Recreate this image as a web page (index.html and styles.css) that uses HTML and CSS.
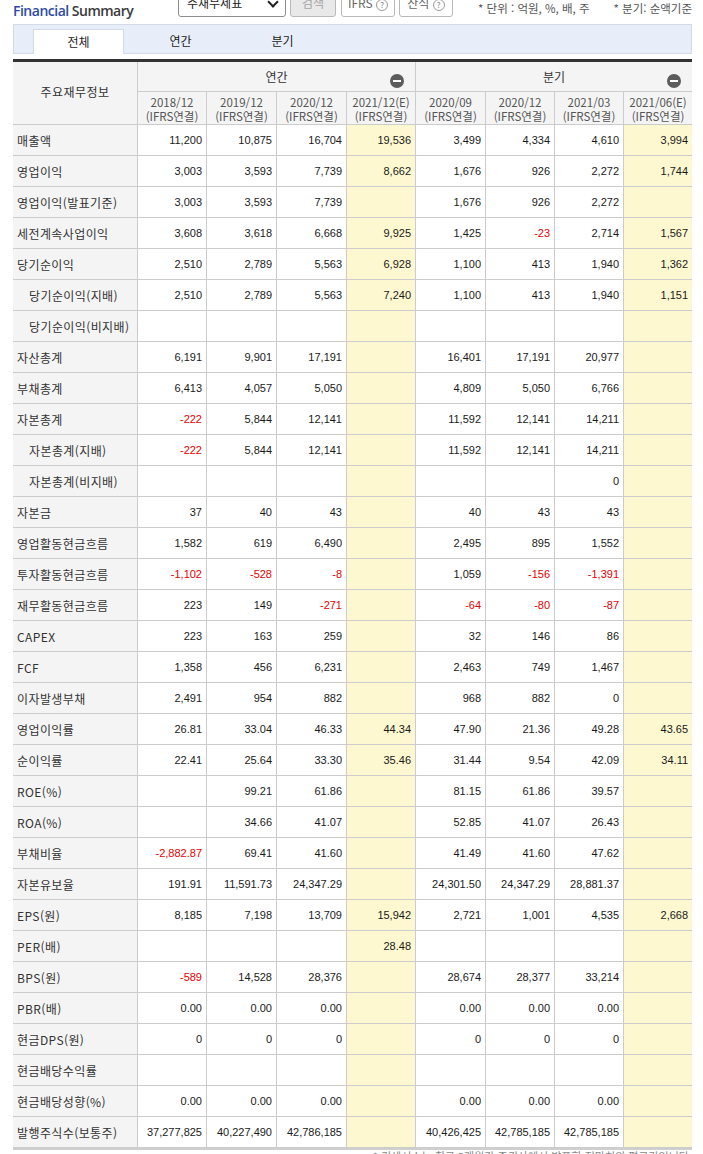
FILE: index.html
```html
<!DOCTYPE html>
<html lang="ko">
<head>
<meta charset="utf-8">
<title>Financial Summary</title>
<link rel="stylesheet" href="styles.css">
</head>
<body>
<div class="wrap">
  <div class="top">
    <h2 class="title"><span class="blue">Financial</span> Summary</h2>
    <div class="sel">주재무제표<span class="chev"></span></div>
    <span class="btn dis">검색</span>
    <span class="btn q ifrs">IFRS <i class="qm">?</i></span>
    <span class="btn q">산식 <i class="qm">?</i></span>
    <span class="unit">* 단위 : 억원, %, 배, 주</span>
    <span class="unit right">* 분기: 순액기준</span>
  </div>

  <div class="tabs">
    <span class="tab on">전체</span>
    <span class="tab">연간</span>
    <span class="tab">분기</span>
  </div>

  <div class="tblbox">
  <table class="fs">
    <colgroup>
      <col class="c-lbl">
      <col class="c1"><col class="c2"><col class="c2"><col class="c1 est">
      <col class="c2"><col class="c1"><col class="c1"><col class="c3 est">
    </colgroup>
    <thead>
      <tr class="h1">
        <th rowspan="2" class="lblh">주요재무정보</th>
        <th colspan="4" class="grp">연간<span class="fold"></span></th>
        <th colspan="4" class="grp last">분기<span class="fold"></span></th>
      </tr>
      <tr class="h2">
        <th>2018/12<br>(IFRS연결)</th>
        <th>2019/12<br>(IFRS연결)</th>
        <th>2020/12<br>(IFRS연결)</th>
        <th>2021/12(E)<br>(IFRS연결)</th>
        <th>2020/09<br>(IFRS연결)</th>
        <th>2020/12<br>(IFRS연결)</th>
        <th>2021/03<br>(IFRS연결)</th>
        <th class="last">2021/06(E)<br>(IFRS연결)</th>
      </tr>
    </thead>
    <tbody>
      <tr><th>매출액</th><td>11,200</td><td>10,875</td><td>16,704</td><td>19,536</td><td>3,499</td><td>4,334</td><td>4,610</td><td>3,994</td></tr>
      <tr><th>영업이익</th><td>3,003</td><td>3,593</td><td>7,739</td><td>8,662</td><td>1,676</td><td>926</td><td>2,272</td><td>1,744</td></tr>
      <tr><th>영업이익(발표기준)</th><td>3,003</td><td>3,593</td><td>7,739</td><td></td><td>1,676</td><td>926</td><td>2,272</td><td></td></tr>
      <tr><th>세전계속사업이익</th><td>3,608</td><td>3,618</td><td>6,668</td><td>9,925</td><td>1,425</td><td class="neg">-23</td><td>2,714</td><td>1,567</td></tr>
      <tr><th>당기순이익</th><td>2,510</td><td>2,789</td><td>5,563</td><td>6,928</td><td>1,100</td><td>413</td><td>1,940</td><td>1,362</td></tr>
      <tr><th class="sub">당기순이익(지배)</th><td>2,510</td><td>2,789</td><td>5,563</td><td>7,240</td><td>1,100</td><td>413</td><td>1,940</td><td>1,151</td></tr>
      <tr><th class="sub">당기순이익(비지배)</th><td></td><td></td><td></td><td></td><td></td><td></td><td></td><td></td></tr>
      <tr><th>자산총계</th><td>6,191</td><td>9,901</td><td>17,191</td><td></td><td>16,401</td><td>17,191</td><td>20,977</td><td></td></tr>
      <tr><th>부채총계</th><td>6,413</td><td>4,057</td><td>5,050</td><td></td><td>4,809</td><td>5,050</td><td>6,766</td><td></td></tr>
      <tr><th>자본총계</th><td class="neg">-222</td><td>5,844</td><td>12,141</td><td></td><td>11,592</td><td>12,141</td><td>14,211</td><td></td></tr>
      <tr><th class="sub">자본총계(지배)</th><td class="neg">-222</td><td>5,844</td><td>12,141</td><td></td><td>11,592</td><td>12,141</td><td>14,211</td><td></td></tr>
      <tr><th class="sub">자본총계(비지배)</th><td></td><td></td><td></td><td></td><td></td><td></td><td>0</td><td></td></tr>
      <tr><th>자본금</th><td>37</td><td>40</td><td>43</td><td></td><td>40</td><td>43</td><td>43</td><td></td></tr>
      <tr><th>영업활동현금흐름</th><td>1,582</td><td>619</td><td>6,490</td><td></td><td>2,495</td><td>895</td><td>1,552</td><td></td></tr>
      <tr><th>투자활동현금흐름</th><td class="neg">-1,102</td><td class="neg">-528</td><td class="neg">-8</td><td></td><td>1,059</td><td class="neg">-156</td><td class="neg">-1,391</td><td></td></tr>
      <tr><th>재무활동현금흐름</th><td>223</td><td>149</td><td class="neg">-271</td><td></td><td class="neg">-64</td><td class="neg">-80</td><td class="neg">-87</td><td></td></tr>
      <tr><th>CAPEX</th><td>223</td><td>163</td><td>259</td><td></td><td>32</td><td>146</td><td>86</td><td></td></tr>
      <tr><th>FCF</th><td>1,358</td><td>456</td><td>6,231</td><td></td><td>2,463</td><td>749</td><td>1,467</td><td></td></tr>
      <tr><th>이자발생부채</th><td>2,491</td><td>954</td><td>882</td><td></td><td>968</td><td>882</td><td>0</td><td></td></tr>
      <tr><th>영업이익률</th><td>26.81</td><td>33.04</td><td>46.33</td><td>44.34</td><td>47.90</td><td>21.36</td><td>49.28</td><td>43.65</td></tr>
      <tr><th>순이익률</th><td>22.41</td><td>25.64</td><td>33.30</td><td>35.46</td><td>31.44</td><td>9.54</td><td>42.09</td><td>34.11</td></tr>
      <tr><th>ROE(%)</th><td></td><td>99.21</td><td>61.86</td><td></td><td>81.15</td><td>61.86</td><td>39.57</td><td></td></tr>
      <tr><th>ROA(%)</th><td></td><td>34.66</td><td>41.07</td><td></td><td>52.85</td><td>41.07</td><td>26.43</td><td></td></tr>
      <tr><th>부채비율</th><td class="neg">-2,882.87</td><td>69.41</td><td>41.60</td><td></td><td>41.49</td><td>41.60</td><td>47.62</td><td></td></tr>
      <tr><th>자본유보율</th><td>191.91</td><td>11,591.73</td><td>24,347.29</td><td></td><td>24,301.50</td><td>24,347.29</td><td>28,881.37</td><td></td></tr>
      <tr><th>EPS(원)</th><td>8,185</td><td>7,198</td><td>13,709</td><td>15,942</td><td>2,721</td><td>1,001</td><td>4,535</td><td>2,668</td></tr>
      <tr><th>PER(배)</th><td></td><td></td><td></td><td>28.48</td><td></td><td></td><td></td><td></td></tr>
      <tr><th>BPS(원)</th><td class="neg">-589</td><td>14,528</td><td>28,376</td><td></td><td>28,674</td><td>28,377</td><td>33,214</td><td></td></tr>
      <tr><th>PBR(배)</th><td>0.00</td><td>0.00</td><td>0.00</td><td></td><td>0.00</td><td>0.00</td><td>0.00</td><td></td></tr>
      <tr><th>현금DPS(원)</th><td>0</td><td>0</td><td>0</td><td></td><td>0</td><td>0</td><td>0</td><td></td></tr>
      <tr><th>현금배당수익률</th><td></td><td></td><td></td><td></td><td></td><td></td><td></td><td></td></tr>
      <tr><th>현금배당성향(%)</th><td>0.00</td><td>0.00</td><td>0.00</td><td></td><td>0.00</td><td>0.00</td><td>0.00</td><td></td></tr>
      <tr><th>발행주식수(보통주)</th><td>37,277,825</td><td>40,227,490</td><td>42,786,185</td><td></td><td>40,426,425</td><td>42,785,185</td><td>42,785,185</td><td></td></tr>
    </tbody>
  </table>
  </div>
  <p class="note">* 컨센서스는 최근 3개월간 증권사에서 발표한 전망치의 평균값입니다.</p>
</div>
</body>
</html>
```

FILE: styles.css
```css
html, body {
  margin: 0;
  padding: 0;
  background: #fff;
}
body {
  font-family: "Noto Sans CJK KR", "Noto Sans", sans-serif;
  color: #333;
  overflow: hidden;
}
.wrap {
  width: 679px;
  margin-left: 13px;
}

/* top bar */
.top {
  display: flex;
  align-items: flex-end;
  height: 24px;
  margin-top: -7px;
}
.title {
  margin: 0 0 -3px 0;
  width: 165px;
  flex: none;
  font-family: "Open Sans", "Noto Sans", sans-serif;
  font-weight: 600;
  font-size: 14px;
  letter-spacing: -0.5px;
  line-height: 18px;
  color: #3a3a3a;
}
.title .blue {
  color: #2e4aa8;
}
.sel {
  flex: none;
  position: relative;
  box-sizing: border-box;
  width: 108px;
  height: 24px;
  border: 1px solid #8d8d8d;
  border-radius: 3px;
  padding-left: 8px;
  font-size: 12px;
  line-height: 18px;
  color: #222;
}
.chev {
  position: absolute;
  right: 8px;
  top: 4px;
  width: 6px;
  height: 6px;
  border-right: 2px solid #222;
  border-bottom: 2px solid #222;
  transform: rotate(45deg);
}
.btn {
  flex: none;
  box-sizing: border-box;
  height: 24px;
  border: 1px solid #b9b9b9;
  border-radius: 3px;
  font-size: 12px;
  line-height: 18px;
  text-align: center;
  color: #666;
  background: #fff;
  margin-left: 4px;
}
.btn.dis {
  width: 46px;
  background: #e9e9e9;
  color: #a5a5a5;
}
.btn.q {
  width: 54px;
}
.btn.ifrs {
  margin-left: 5px;
}
.qm {
  display: inline-block;
  box-sizing: border-box;
  width: 12px;
  height: 12px;
  border: 1px solid #9a9a9a;
  border-radius: 50%;
  font-style: normal;
  font-size: 8px;
  line-height: 10px;
  color: #888;
  vertical-align: 0;
}
.unit {
  flex: none;
  margin-left: 25px;
  font-size: 11.5px;
  line-height: 18px;
  color: #555;
}
.unit.right {
  margin-left: auto;
}

/* tabs */
.tabs {
  display: flex;
  align-items: flex-end;
  box-sizing: border-box;
  height: 30px;
  margin-top: 7px;
  padding-left: 19px;
  border: 1px solid #d3dbe9;
  background: #e8eef9;
}
.tab {
  flex: none;
  box-sizing: border-box;
  width: 91px;
  height: 25px;
  margin-right: 11px;
  margin-bottom: -1px;
  font-size: 12px;
  line-height: 24px;
  text-align: center;
  color: #222;
}
.tab.on {
  background: #fff;
  border: 1px solid #d3dbe9;
  border-bottom: none;
}

/* table */
.tblbox {
  margin-top: 5px;
  border-top: 3px solid #333;
  border-bottom: 2px solid #cfcfcf;
}
.fs {
  width: 679px;
  table-layout: fixed;
  border-collapse: separate;
  border-spacing: 0;
}
.c-lbl { width: 125px; }
.c1 { width: 69px; }
.c2 { width: 70px; }
.c3 { width: 68px; }
col.est { background: #fdf8d0; }

.fs th,
.fs td {
  box-sizing: border-box;
  padding: 0;
  border-right: 1px solid #cccccc;
  border-bottom: 1px solid #cccccc;
  white-space: nowrap;
  overflow: hidden;
}
.fs td:last-child,
.fs th.last {
  border-right: none;
}
.fs thead th {
  background: #f4f4f4;
  font-weight: normal;
  text-align: center;
  color: #555;
}
.fs .h1 th {
  height: 30px;
  font-size: 12px;
  color: #333;
}
.fs .h1 th.grp {
  position: relative;
  padding-bottom: 1px;
}
.fs .h2 th {
  height: 33px;
  font-size: 11.5px;
  line-height: 14px;
  letter-spacing: 0;
  padding-top: 1px;
}
.fs th.lblh {
  font-size: 12px;
  color: #333;
  padding-bottom: 3px;
  letter-spacing: 0.5px;
}
.fold {
  position: absolute;
  right: 11px;
  bottom: 3px;
  width: 14px;
  height: 14px;
  border-radius: 50%;
  background: #5c5c5c;
}
.fold::after {
  content: "";
  position: absolute;
  left: 3px;
  top: 6px;
  width: 8px;
  height: 2px;
  background: #fff;
}

.fs tbody th {
  height: 31px;
  background: #f4f4f4;
  text-align: left;
  padding-left: 4px;
  font-weight: normal;
  font-size: 12px;
  letter-spacing: 0.4px;
  color: #333;
}
.fs tbody th.sub {
  padding-left: 16px;
}
.fs tbody td {
  height: 31px;
  padding-right: 4px;
  text-align: right;
  font-family: "Liberation Sans", Arial, sans-serif;
  font-size: 11px;
  color: #1a1a1a;
}
.fs td.neg {
  color: #e40000;
}

.note {
  margin: 0;
  text-align: right;
  font-size: 11px;
  line-height: 12px;
  color: #888;
}
```
